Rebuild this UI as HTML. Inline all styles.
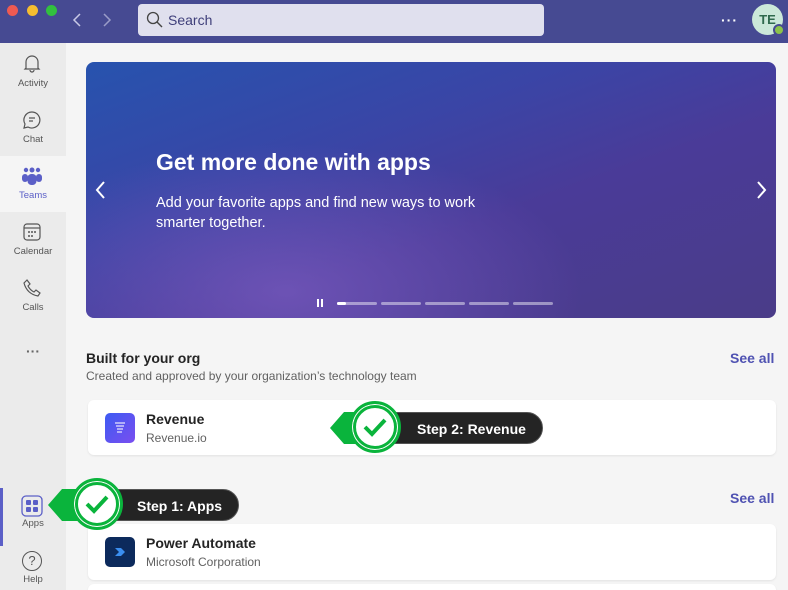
<!DOCTYPE html>
<html><head><meta charset="utf-8"><style>
*{box-sizing:border-box;margin:0;padding:0}
html,body{width:788px;height:590px;overflow:hidden}
body{background:#f5f5f5;font-family:"Liberation Sans",sans-serif;position:relative}
.abs{position:absolute}
.top{left:0;top:0;width:788px;height:43px;background:#464a92}
.side{left:0;top:43px;width:66px;height:547px;background:#ebebeb}
.nav{position:absolute;left:0;width:66px;text-align:center;font-size:9.5px;color:#555}
.card{position:absolute;left:88px;width:688px;background:#fff;border-radius:6px;box-shadow:0 1px 2px rgba(0,0,0,.08)}
.t1{font-size:14px;font-weight:bold;color:#242424}
.t2{font-size:12px;color:#616161}
.pill{position:absolute;background:#242424;color:#fff;font-weight:bold;font-size:14px;border-radius:16px;height:32px;line-height:32px;border:1px solid #555}
.chk{position:absolute;width:52px;height:52px;border-radius:50%;background:#0ab43c;border:3px solid #0ab43c;box-shadow:0 0 0 1px #fff inset}
.chk i{position:absolute;left:4px;top:4px;width:38px;height:38px;border-radius:50%;background:#fff;border:4px solid #fff}
.chk svg{position:absolute;left:9px;top:10px}
</style></head><body>
<div class="abs top"></div>
<div class="abs" style="left:7px;top:5px;width:11px;height:11px;border-radius:50%;background:#ee5a52"></div>
<div class="abs" style="left:27px;top:5px;width:11px;height:11px;border-radius:50%;background:#f5bd30"></div>
<div class="abs" style="left:46px;top:5px;width:11px;height:11px;border-radius:50%;background:#32c03f"></div>
<svg class="abs" style="left:70px;top:12px" width="50" height="16"><path d="M10 2 L4 8 L10 14" stroke="#c8c9e6" stroke-width="1.5" fill="none"/><path d="M34 2 L40 8 L34 14" stroke="#9a9cc8" stroke-width="1.5" fill="none"/></svg>
<div class="abs" style="left:138px;top:4px;width:406px;height:32px;background:#e0e0ee;border-radius:4px"></div>
<svg class="abs" style="left:146px;top:11px" width="18" height="18"><circle cx="7" cy="7" r="5.5" stroke="#444" stroke-width="1.3" fill="none"/><path d="M11 11 L16 16" stroke="#444" stroke-width="1.4"/></svg>
<div class="abs" style="left:168px;top:12px;font-size:14px;color:#3f3f7a">Search</div>
<div class="abs" style="left:721px;top:12px;color:#fff;font-size:14px;font-weight:bold;letter-spacing:1px">···</div>
<div class="abs" style="left:752px;top:4px;width:31px;height:31px;border-radius:50%;background:#cbe8d9;color:#2f6a4d;font-size:13px;font-weight:bold;text-align:center;line-height:31px">TE</div>
<div class="abs" style="left:773px;top:24px;width:12px;height:12px;border-radius:50%;background:#8bc34a;border:2px solid #464a92"></div>

<div class="abs side"></div>
<div class="abs" style="left:0;top:156px;width:66px;height:56px;background:#f5f5f5"></div>
<div class="abs" style="left:0;top:488px;width:3px;height:58px;background:#5b5fc7"></div>
<svg class="abs" style="left:22px;top:54px" width="20" height="20"><path d="M4 14 V8 a6 6 0 0 1 12 0 V14 L17 15 H3 Z M8 16 a2 2 0 0 0 4 0" stroke="#555" stroke-width="1.2" fill="none"/></svg>
<div class="nav" style="top:78px">Activity</div>
<svg class="abs" style="left:22px;top:110px" width="20" height="20"><path d="M10 2 a8 8 0 1 1 -4 15 L2 18 L3 14 A8 8 0 0 1 10 2 Z M7 8 H13 M7 11 H11" stroke="#555" stroke-width="1.2" fill="none"/></svg>
<div class="nav" style="top:134px">Chat</div>
<svg class="abs" style="left:21px;top:167px" width="22" height="20"><circle cx="5" cy="3" r="2.2" fill="#5b5fc7"/><circle cx="11" cy="3" r="2.5" fill="#5b5fc7"/><circle cx="17" cy="3" r="2.2" fill="#5b5fc7"/><rect x="1" y="7" width="6" height="8" rx="3" fill="#5b5fc7"/><rect x="15" y="7" width="6" height="8" rx="3" fill="#5b5fc7"/><rect x="6.5" y="7" width="9" height="11" rx="4" fill="#5b5fc7"/></svg>
<div class="nav" style="top:190px;color:#5b5fc7">Teams</div>
<svg class="abs" style="left:22px;top:222px" width="20" height="20"><rect x="2" y="2" width="16" height="16" rx="3" stroke="#555" stroke-width="1.2" fill="none"/><path d="M2 6 H18" stroke="#555" stroke-width="1.2"/><g fill="#555"><circle cx="7" cy="10" r="1"/><circle cx="10" cy="10" r="1"/><circle cx="13" cy="10" r="1"/><circle cx="7" cy="14" r="1"/><circle cx="10" cy="14" r="1"/></g></svg>
<div class="nav" style="top:246px">Calendar</div>
<svg class="abs" style="left:22px;top:278px" width="20" height="20"><path d="M5 2 L8 6 L6 8 Q8 12 12 14 L14 12 L18 15 L16 18 Q5 16 2 5 Z" stroke="#555" stroke-width="1.2" fill="none"/></svg>
<div class="nav" style="top:302px">Calls</div>
<div class="nav" style="top:343px;font-size:14px;font-weight:bold;color:#666">···</div>
<svg class="abs" style="left:21px;top:495px" width="22" height="22"><rect x="1" y="1" width="20" height="20" rx="4" stroke="#5b5fc7" stroke-width="1.3" fill="none"/><rect x="5" y="5" width="5" height="5" rx="1" fill="#5b5fc7"/><rect x="12" y="5" width="5" height="5" rx="1" fill="#5b5fc7"/><rect x="5" y="12" width="5" height="5" rx="1" fill="#5b5fc7"/><rect x="12" y="12" width="5" height="5" rx="1" fill="#5b5fc7"/></svg>
<div class="nav" style="top:518px">Apps</div>
<div class="abs" style="left:22px;top:551px;width:20px;height:20px;border-radius:50%;border:1.2px solid #555;text-align:center;font-size:13px;line-height:18px;color:#555">?</div>
<div class="nav" style="top:574px">Help</div>

<div class="abs" style="left:86px;top:62px;width:690px;height:256px;border-radius:8px;background:linear-gradient(160deg,#2753ae 0%,#3a45a6 35%,#4a3b98 60%,#4a3c88 100%);overflow:hidden">
<div class="abs" style="left:-100px;top:80px;width:600px;height:300px;border-radius:50%;background:radial-gradient(ellipse,rgba(120,90,190,.75),rgba(120,90,190,0) 70%)"></div>
</div>
<div class="abs" style="left:156px;top:149px;font-size:23px;font-weight:bold;color:#fff">Get more done with apps</div>
<div class="abs" style="left:156px;top:193px;font-size:14.5px;line-height:20px;color:#fff;width:350px">Add your favorite apps and find new ways to work smarter together.</div>
<svg class="abs" style="left:94px;top:180px" width="14" height="20"><path d="M10 2 L3 10 L10 18" stroke="#fff" stroke-width="2" fill="none"/></svg>
<svg class="abs" style="left:754px;top:180px" width="14" height="20"><path d="M4 2 L11 10 L4 18" stroke="#fff" stroke-width="2" fill="none"/></svg>
<div class="abs" style="left:317px;top:299px;width:2px;height:8px;background:#fff"></div>
<div class="abs" style="left:321px;top:299px;width:2px;height:8px;background:#fff"></div>
<div class="abs" style="left:337px;top:302px;width:40px;height:3px;border-radius:2px;background:rgba(255,255,255,.45)"></div>
<div class="abs" style="left:337px;top:302px;width:9px;height:3px;border-radius:2px;background:#fff"></div>
<div class="abs" style="left:381px;top:302px;width:40px;height:3px;border-radius:2px;background:rgba(255,255,255,.45)"></div>
<div class="abs" style="left:425px;top:302px;width:40px;height:3px;border-radius:2px;background:rgba(255,255,255,.45)"></div>
<div class="abs" style="left:469px;top:302px;width:40px;height:3px;border-radius:2px;background:rgba(255,255,255,.45)"></div>
<div class="abs" style="left:513px;top:302px;width:40px;height:3px;border-radius:2px;background:rgba(255,255,255,.45)"></div>

<div class="abs t1" style="left:86px;top:350px">Built for your org</div>
<div class="abs t2" style="left:86px;top:369px">Created and approved by your organization’s technology team</div>
<div class="abs" style="left:730px;top:350px;font-size:14px;font-weight:bold;color:#4f52b2">See all</div>
<div class="card" style="top:400px;height:55px"></div>
<div class="abs" style="left:105px;top:413px;width:30px;height:30px;border-radius:5px;background:linear-gradient(135deg,#3d5bf2,#7a4ef0)"></div>
<svg class="abs" style="left:113px;top:421px" width="14" height="14"><g stroke="#fff" stroke-width="1.2" opacity=".85"><path d="M2 2H12M3 5H11M4 8H10M4 11H9"/></g></svg>
<div class="abs t1" style="left:146px;top:411px">Revenue</div>
<div class="abs t2" style="left:146px;top:431px">Revenue.io</div>

<div class="abs t1" style="left:86px;top:490px">Manage tasks</div>
<div class="abs" style="left:730px;top:490px;font-size:14px;font-weight:bold;color:#4f52b2">See all</div>
<div class="card" style="top:524px;height:56px"></div>
<div class="abs" style="left:105px;top:537px;width:30px;height:30px;border-radius:5px;background:#0c2a5c"></div>
<svg class="abs" style="left:113px;top:545px" width="14" height="14"><path d="M2 3 H8 L12 7 L8 11 H2 L6 7 Z" fill="#3a8ef0"/></svg>
<div class="abs t1" style="left:146px;top:535px">Power Automate</div>
<div class="abs t2" style="left:146px;top:555px">Microsoft Corporation</div>
<div class="card" style="top:584px;height:6px;border-radius:6px 6px 0 0"></div>

<div class="pill" style="left:375px;top:412px;width:168px;padding-left:41px">Step 2: Revenue</div>
<svg class="abs" style="left:330px;top:412px" width="30" height="32"><path d="M30 0 H14 L0 16 L14 32 H30 Z" fill="#0ab43c"/></svg>
<div class="chk" style="left:349px;top:401px"><i></i><svg width="28" height="26"><path d="M4 13 L11 20 L24 6" stroke="#0ab43c" stroke-width="4" fill="none"/></svg></div>
<div class="pill" style="left:95px;top:489px;width:144px;padding-left:41px">Step 1: Apps</div>
<svg class="abs" style="left:48px;top:489px" width="30" height="32"><path d="M30 0 H14 L0 16 L14 32 H30 Z" fill="#0ab43c"/></svg>
<div class="chk" style="left:71px;top:478px"><i></i><svg width="28" height="26"><path d="M4 13 L11 20 L24 6" stroke="#0ab43c" stroke-width="4" fill="none"/></svg></div>
</body></html>
